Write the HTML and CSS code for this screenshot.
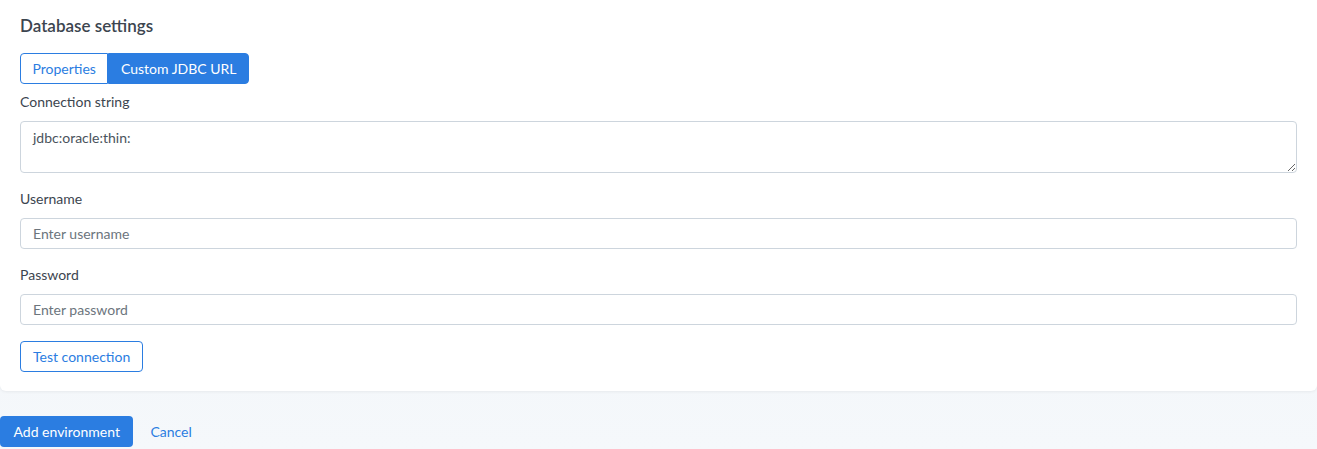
FILE: index.html
```html
<!DOCTYPE html>
<html lang="en">
  <head>
    <meta charset="UTF-8" />
    <meta name="viewport" content="width=device-width, initial-scale=1.0" />
    <title>Add environment</title>
    <link rel="stylesheet" href="styles.css">
  </head>
  <body>
    <!-- Database settings card -->
    <div class="card">
      <h2 class="card-title">Database settings</h2>

      <div class="toggle-group">
        <button class="toggle">Properties</button>
        <button class="toggle active">Custom JDBC URL</button>
      </div>

      <label class="field-label">Connection string</label>
      <textarea class="field textarea">jdbc:oracle:thin:</textarea>

      <label class="field-label">Username</label>
      <input class="field" type="text" placeholder="Enter username" />

      <label class="field-label">Password</label>
      <input class="field" type="password" placeholder="Enter password" />

      <button class="btn-outline">Test connection</button>
    </div>

    <!-- Footer actions -->
    <div class="actions">
      <button class="btn-primary">Add environment</button>
      <a class="link" href="#">Cancel</a>
    </div>
  </body>
</html>
```

FILE: styles.css
```css
body {
  margin: 0;
  background: linear-gradient(#eef2f6, #f5f8fb);
  font-family: Lato, "Open Sans", sans-serif;
  color: #3c454f;
  min-height: 449px;
}
.card {
  background: white;
  border-radius: 0 0 6px 6px;
  box-shadow: 0 1px 3px rgba(0, 0, 0, 0.06);
  padding: 16px 20px 19px 20px;
  display: flex;
  flex-direction: column;
  align-items: flex-start;
}
.card-title {
  margin: 0 0 17px 0;
  font-size: 17px;
  font-weight: 600;
  line-height: 20px;
}
.toggle-group {
  display: flex;
  margin-bottom: 8px;
}
.toggle {
  font-family: inherit;
  font-size: 14px;
  height: 31px;
  padding: 0 11.5px;
  border: 1px solid #2b7de1;
  background: white;
  color: #2b7de1;
  cursor: pointer;
}
.toggle:first-child {
  border-radius: 4px 0 0 4px;
}
.toggle:last-child {
  border-radius: 0 4px 4px 0;
}
.toggle.active {
  background: #2b7de1;
  color: white;
}
.field-label {
  font-size: 14px;
  line-height: 20px;
  margin-bottom: 9px;
}
.field {
  box-sizing: border-box;
  width: 100%;
  height: 31px;
  border: 1px solid #cdd5dd;
  border-radius: 4px;
  padding: 0 12px;
  font-family: inherit;
  font-size: 14px;
  color: #4a535c;
  margin: 0 0 16px 0;
}
.field::placeholder {
  color: #6c757d;
}
.textarea {
  height: 52px;
  padding: 7px 12px;
  resize: vertical;
}
.btn-outline {
  font-family: inherit;
  font-size: 14px;
  height: 31px;
  padding: 0 12px;
  background: white;
  color: #2b7de1;
  border: 1px solid #2b7de1;
  border-radius: 4px;
  cursor: pointer;
}
.actions {
  display: flex;
  align-items: center;
  gap: 17px;
  margin-top: 25px;
}
.btn-primary {
  font-family: inherit;
  font-size: 14px;
  height: 31px;
  padding: 0 13.5px;
  background: #2b7de1;
  color: white;
  border: none;
  border-radius: 4px;
  cursor: pointer;
}
.link {
  color: #2b7de1;
  font-size: 14px;
  text-decoration: none;
}
```
